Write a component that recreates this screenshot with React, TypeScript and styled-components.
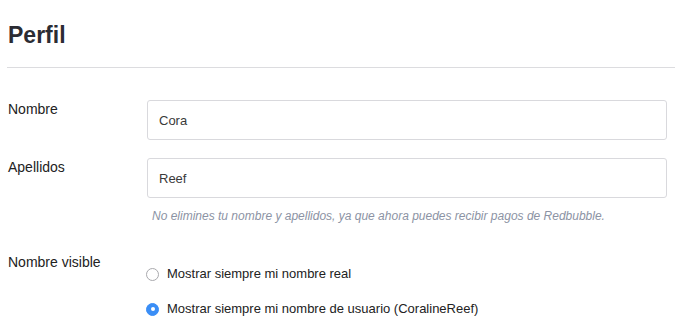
import styled, { createGlobalStyle } from "styled-components";

const GlobalStyle = createGlobalStyle`
  body {
    margin: 0;
    background: #ffffff;
    font-family: "Liberation Sans", Arial, sans-serif;
    color: #222222;
  }
`;

const Page = styled.div`
  padding: 22px 10px 0 7px;
`;

const Header = styled.div`
  padding-bottom: 19px;
  border-bottom: 1px solid #dcdcdf;
`;

const Title = styled.h1`
  margin: 0 0 0 1px;
  font-size: 23px;
  line-height: 26px;
  font-weight: 700;
  color: #2b2c33;
`;

const Form = styled.div`
  padding: 32px 8px 0 1px;
  display: flex;
  flex-direction: column;
`;

const Row = styled.div<{ $gap?: number }>`
  display: grid;
  grid-template-columns: 139px 1fr;
  margin-bottom: ${(p) => p.$gap ?? 18}px;
`;

const Label = styled.div`
  font-size: 14px;
  line-height: 18px;
  color: #222222;
`;

const Field = styled.div`
  display: flex;
  flex-direction: column;
`;

const Input = styled.input`
  box-sizing: border-box;
  height: 40px;
  width: 100%;
  border: 1px solid #d9d9dd;
  border-radius: 3px;
  padding: 0 11px;
  font-family: "Liberation Sans", Arial, sans-serif;
  font-size: 13px;
  color: #3a3a3a;
  background: #ffffff;
  outline: none;
`;

const Help = styled.p`
  margin: 9px 0 0 5px;
  font-size: 12px;
  line-height: 18px;
  font-style: italic;
  color: #8c93a4;
`;

const Options = styled.div`
  display: flex;
  flex-direction: column;
  gap: 17px;
  padding-top: 12px;
`;

const Option = styled.label`
  display: flex;
  align-items: center;
  gap: 8px;
  margin-left: -1px;
  font-size: 13px;
  line-height: 18px;
  color: #222222;
  cursor: pointer;
`;

const Radio = styled.span<{ $checked?: boolean }>`
  box-sizing: border-box;
  width: 13px;
  height: 13px;
  border-radius: 50%;
  display: flex;
  align-items: center;
  justify-content: center;
  background: ${(p) => (p.$checked ? "#3a8ef6" : "#ffffff")};
  border: 1px solid ${(p) => (p.$checked ? "#3a8ef6" : "#a9a9ad")};
  &::after {
    content: "";
    width: 4px;
    height: 4px;
    border-radius: 50%;
    background: #ffffff;
    display: ${(p) => (p.$checked ? "block" : "none")};
  }
`;

export default function App() {
  return (
    <>
      <GlobalStyle />
      <Page>
        <Header>
          <Title>Perfil</Title>
        </Header>
        <Form>
          <Row>
            <Label>Nombre</Label>
            <Input defaultValue="Cora" />
          </Row>
          <Row $gap={28}>
            <Label>Apellidos</Label>
            <Field>
              <Input defaultValue="Reef" />
              <Help>
                No elimines tu nombre y apellidos, ya que ahora puedes recibir
                pagos de Redbubble.
              </Help>
            </Field>
          </Row>
          <Row>
            <Label>Nombre visible</Label>
            <Options>
              <Option>
                <Radio />
                Mostrar siempre mi nombre real
              </Option>
              <Option>
                <Radio $checked />
                Mostrar siempre mi nombre de usuario (CoralineReef)
              </Option>
            </Options>
          </Row>
        </Form>
      </Page>
    </>
  );
}
